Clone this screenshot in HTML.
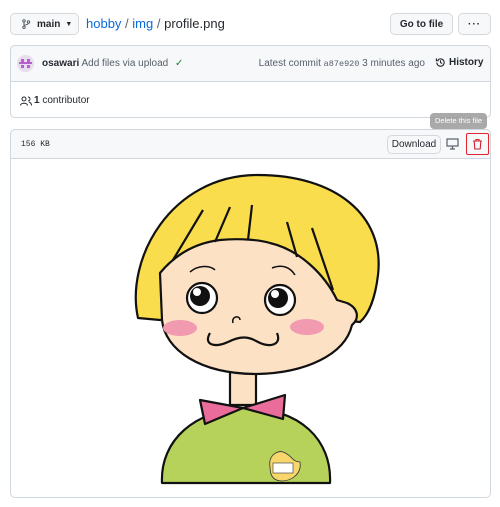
<!DOCTYPE html>
<html><head><style>
*{box-sizing:border-box;margin:0;padding:0}
body{width:500px;height:507px;background:#fff;font-family:"Liberation Sans",sans-serif;color:#24292f;position:relative;overflow:hidden;font-size:10px}
.a{position:absolute}
.btn{position:absolute;border:1px solid #d5d8da;border-radius:5px;background:#f6f8fa;font-weight:bold;font-size:10px;display:flex;align-items:center;justify-content:center}
.box{position:absolute;border:1px solid #d0d7de;border-radius:5px}
</style></head><body>
<div class="btn" style="left:10px;top:13px;width:69px;height:22px;justify-content:flex-start;padding-left:10px">
<svg width="10" height="10" viewBox="0 0 10 10"><circle cx="3" cy="2" r="1.2" fill="none" stroke="#57606a"/><circle cx="3" cy="8.3" r="1.2" fill="none" stroke="#57606a"/><circle cx="7.5" cy="3" r="1.2" fill="none" stroke="#57606a"/><path d="M3 3.2V7M7.5 4.2C7.5 6 3 5.5 3 7" stroke="#57606a" fill="none"/></svg>
<span style="margin-left:6px">main</span><span style="margin-left:5px;font-size:7px">▼</span></div>
<div class="a" style="left:86px;top:16px;font-size:13px"><span style="color:#0969da">hobby</span> <span style="color:#57606a">/</span> <span style="color:#0969da">img</span> <span style="color:#57606a">/</span> <b style="font-weight:normal;color:#24292f">profile.png</b></div>
<div class="btn" style="left:390px;top:13px;width:63px;height:22px">Go to file</div>
<div class="btn" style="left:458px;top:13px;width:33px;height:22px;letter-spacing:1px">···</div>

<div class="box" style="left:10px;top:45px;width:481px;height:73px"></div>
<div class="a" style="left:10px;top:45px;width:481px;height:37px;background:#f6f8fa;border:1px solid #d0d7de;border-radius:5px 5px 0 0"></div>
<div class="a" style="left:17px;top:55px;width:17px;height:17px;border-radius:50%;background:#e8dcef;overflow:hidden">
<svg width="17" height="17"><g fill="#b560cc"><rect x="4" y="4" width="3" height="3"/><rect x="10" y="4" width="3" height="3"/><rect x="2" y="7" width="13" height="2"/><rect x="4" y="10" width="3" height="3"/><rect x="10" y="10" width="3" height="3"/></g></svg></div>
<div class="a" style="left:42px;top:58px;font-size:10px"><b>osawari</b> <span style="color:#57606a">Add files via upload</span> <span style="color:#1a7f37;margin-left:4px">✓</span></div>
<div class="a" style="right:75px;top:58px;font-size:10px;color:#57606a;white-space:nowrap">Latest commit <span style="font-family:'Liberation Mono',monospace;font-size:8.5px">a87e920</span> 3 minutes ago</div>
<div class="a" style="left:435px;top:57px;font-size:10px;font-weight:bold;display:flex;align-items:center"><svg width="11" height="11" viewBox="0 0 12 12" style="margin-right:3px"><path d="M2 6a4 4 0 1 0 1.2-2.8M1.5 1.5v2.5H4M6 3.5V6l1.8 1.2" stroke="#24292f" fill="none" stroke-width="1.2"/></svg>History</div>
<div class="a" style="left:20px;top:95px;font-size:10px;display:flex;align-items:center"><svg width="12" height="10" viewBox="0 0 12 10" style="margin-right:2px"><circle cx="4" cy="3" r="2" fill="none" stroke="#24292f"/><path d="M0.5 9.5c0-3 7-3 7 0M8 1a2 2 0 0 1 0 4M9 6c1.5.5 2.5 1.5 2.5 3.5" stroke="#24292f" fill="none"/></svg><b>1</b>&nbsp;contributor</div>

<div class="box" style="left:10px;top:129px;width:481px;height:369px"></div>
<div class="a" style="left:10px;top:129px;width:481px;height:30px;background:#f6f8fa;border:1px solid #d0d7de;border-radius:5px 5px 0 0"></div>
<div class="a" style="left:21px;top:140px;font-family:'Liberation Mono',monospace;font-size:8px;color:#24292f">156 KB</div>
<div class="btn" style="left:387px;top:135px;width:54px;height:19px;font-weight:normal;background:#f6f8fa">Download</div>
<svg class="a" style="left:446px;top:138px" width="13" height="12" viewBox="0 0 13 12"><rect x="1" y="1" width="11" height="7" fill="none" stroke="#57606a" stroke-width="1.2"/><path d="M6.5 8v3M4 11h5" stroke="#57606a" stroke-width="1.2"/></svg>
<div class="a" style="left:466px;top:133px;width:23px;height:22px;border:1.5px solid #e0262c;border-radius:2px"></div>
<svg class="a" style="left:472px;top:138px" width="11" height="12" viewBox="0 0 11 12"><path d="M1 3h9M4 3V1.5h3V3M2.2 3l.6 8h5.4l.6-8" stroke="#cf222e" fill="none" stroke-width="1.1"/></svg>
<div class="a" style="left:430px;top:113px;width:57px;height:16px;background:#9b9b9b;border-radius:4px;color:#fff;font-size:7.5px;text-align:center;line-height:16px;opacity:.85">Delete this file</div>

<svg class="a" style="left:0;top:0" width="500" height="507">
<g stroke="#111" stroke-width="2.2" stroke-linejoin="round">
<path d="M162 483 C160 440 195 410 245 408 C300 408 332 440 330 483 Z" fill="#b7d25a"/>
<path d="M230 370 L230 405 L256 405 L256 370 Z" fill="#fde1c4"/>
<path d="M200 400 L205 424 L243 408 Z" fill="#ea6c9a"/>
<path d="M285 395 L283 419 L243 408 Z" fill="#ea6c9a"/>
<path d="M138 318 C125 260 170 175 258 175 C335 175 385 215 378 275 C375 300 368 315 360 322 L340 320 L160 320 Z" fill="#f9dd4c"/>
<path d="M160 273 C175 255 195 243 220 240 C240 238 260 240 270 243 C300 250 325 275 337 300 L347 303 C358 308 360 318 352 325 C345 355 305 373 257 374 C200 374 165 350 162 320 Z" fill="#fde1c4"/>
<path d="M173 260 L203 210 M215 242 L230 207 M248 240 L252 205 M287 222 L297 257 M312 228 L333 290" fill="none"/>
<circle cx="202" cy="298" r="15" fill="#fff"/><circle cx="280" cy="300" r="15" fill="#fff"/>
<path d="M190 272 C198 265 210 265 215 270 M272 268 C282 264 290 267 295 275" fill="none" stroke-width="1.5"/>
<path d="M233 323 C231 316 240 315 240 320" fill="none" stroke-width="1.5"/>
<path d="M210 333 C203 345 215 348 228 342 C240 336 248 336 258 342 C270 348 282 345 277 333" fill="none"/>
</g>
<circle cx="200" cy="296" r="10" fill="#111"/><circle cx="197" cy="292" r="4" fill="#fff"/>
<circle cx="278" cy="298" r="10" fill="#111"/><circle cx="275" cy="294" r="4" fill="#fff"/>
<ellipse cx="180" cy="328" rx="17" ry="8" fill="#f29ab0"/>
<ellipse cx="307" cy="327" rx="17" ry="8" fill="#f29ab0"/>
<path d="M270 467 C268 455 278 450 283 452 C292 455 292 462 300 462 C302 475 290 481 282 481 C273 481 270 475 270 467 Z" fill="#f7d66b" stroke="#333" stroke-width="0.8"/>
<rect x="273" y="463" width="20" height="10" fill="#fff" stroke="#333" stroke-width="0.6"/>
</svg>
</body></html>
